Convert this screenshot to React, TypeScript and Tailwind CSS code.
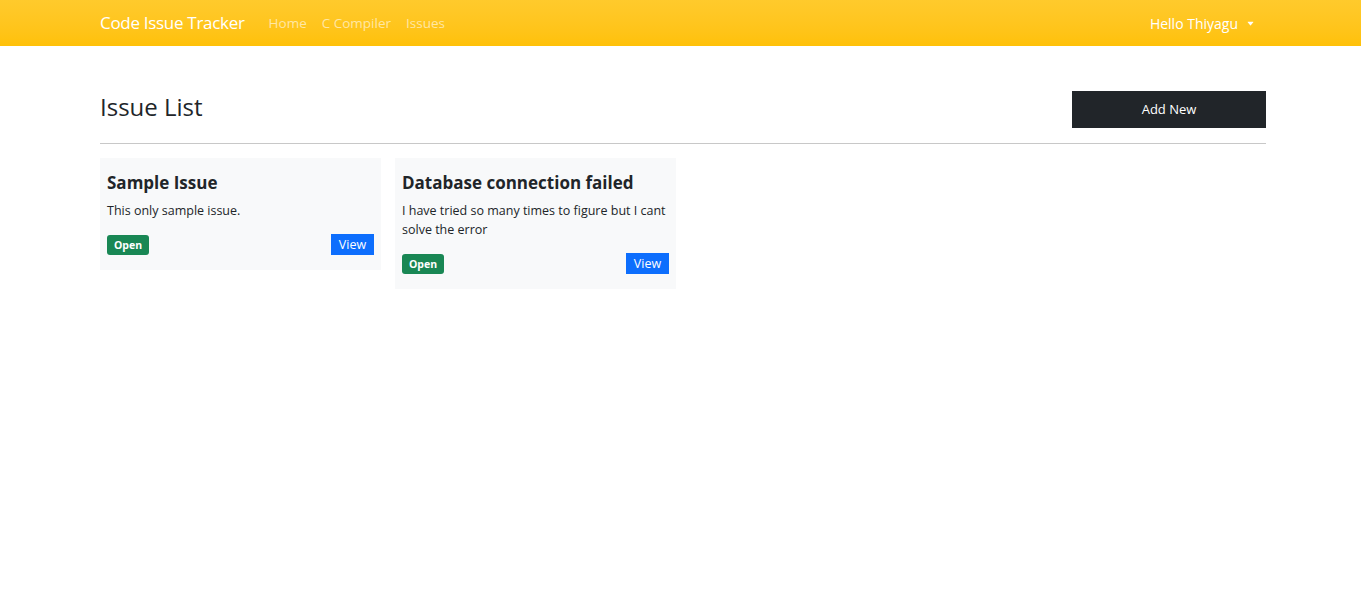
import { IoCaretDown } from "react-icons/io5";

const issues = [
  { id: 1, title: "Sample Issue", body: "This only sample issue.", status: "Open" },
  {
    id: 2,
    title: "Database connection failed",
    body: "I have tried so many times to figure but I cant solve the error",
    status: "Open",
  },
];

export default function App() {
  return (
    <div className="min-h-[593px] bg-white text-[#212529] font-['Open_Sans','Noto_Sans',sans-serif]">
      <nav className="h-[46px] bg-gradient-to-b from-[#ffca2c] to-[#ffc107]">
        <div className="ml-[100px] mr-[95px] flex h-full items-center">
          <span className="text-[17px] tracking-[-0.3px] text-white">Code Issue Tracker</span>
          <ul className="ml-[24px] flex gap-[15px] text-[13.5px] text-white/60">
            <li>Home</li>
            <li>C Compiler</li>
            <li>Issues</li>
          </ul>
          <div className="ml-auto mr-[11px] flex items-center gap-[8px] text-[14px] text-white">
            Hello Thiyagu
            <IoCaretDown size={9} />
          </div>
        </div>
      </nav>

      <main className="ml-[100px] mr-[95px]">
        <div className="flex items-center justify-between pt-[45px] pb-[15px]">
          <h1 className="text-[24px] font-medium leading-[32px] -mt-[5px]">Issue List</h1>
          <button className="h-[37px] w-[194px] bg-[#212529] text-[13px] text-white">Add New</button>
        </div>
        <hr className="border-[#c8c8c8]" />

        <div className="mt-[14px] flex items-start gap-[14px]">
          {issues.map((issue) => (
            <div key={issue.id} className="w-[281px] bg-[#f8f9fa] px-[7px] pt-[13px] pb-[15px]">
              <h5 className="text-[17px] font-bold leading-[24px]">{issue.title}</h5>
              <p className="mt-[6px] text-[12.5px] leading-[19px]">{issue.body}</p>
              <div className="mt-[14px] flex items-center justify-between">
                <span className="rounded-[3px] bg-[#198754] px-[7px] py-[3px] text-[10.5px] font-bold leading-[14px] text-white">
                  {issue.status}
                </span>
                <button className="h-[21px] w-[43px] bg-[#0d6efd] text-[12.5px] leading-[21px] text-white">
                  View
                </button>
              </div>
            </div>
          ))}
        </div>
      </main>
    </div>
  );
}
